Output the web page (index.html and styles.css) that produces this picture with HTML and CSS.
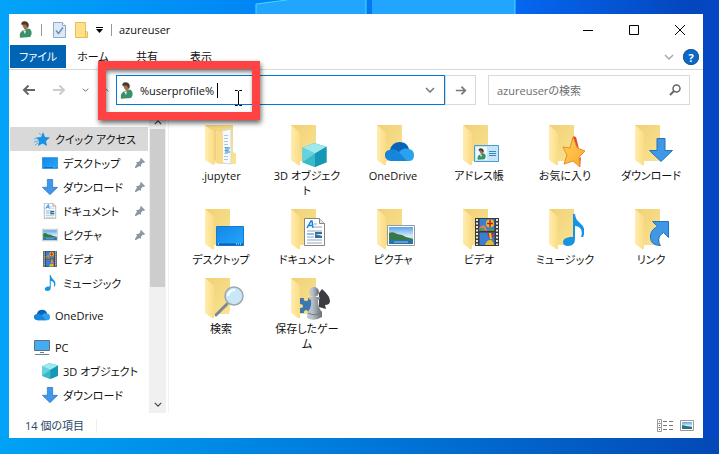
FILE: index.html
```html
<!DOCTYPE html>
<html lang="ja">
<head>
<meta charset="utf-8">
<title>azureuser</title>
<link rel="stylesheet" href="styles.css">
</head>
<body>
<svg width="0" height="0" class="defs" aria-hidden="true">
  <defs>
    <linearGradient id="gBack" x2="1" y2="1"><stop offset="0" stop-color="#f0d075"/><stop offset="1" stop-color="#fae392"/></linearGradient>
    <linearGradient id="gFlap" x2="1" y2="0"><stop offset="0" stop-color="#ffedb0"/><stop offset="1" stop-color="#fbdc84"/></linearGradient>
    <linearGradient id="gSky" x2="0" y2="1"><stop offset="0" stop-color="#5aa5e8"/><stop offset=".55" stop-color="#d8ecf8"/><stop offset="1" stop-color="#4b8fc0"/></linearGradient>
    <linearGradient id="gScreen" x2="1" y2="1"><stop offset="0" stop-color="#1486e8"/><stop offset="1" stop-color="#24a8fb"/></linearGradient>
    <linearGradient id="gStar" x2="1" y2="1"><stop offset="0" stop-color="#ffd65a"/><stop offset="1" stop-color="#fba52c"/></linearGradient>
    <linearGradient id="gPawn" x2="1" y2="0"><stop offset="0" stop-color="#c9cfd4"/><stop offset=".4" stop-color="#b4bbc1"/><stop offset="1" stop-color="#666e75"/></linearGradient>
    <symbol id="folder" viewBox="0 0 44 42">
      <path d="M6 0H31V31L30 36H15L6 30Z" fill="url(#gBack)"/>
      <path d="M6 0L14 7Q15 8 15 10V39Q15 41 13 40L6 35Z" fill="url(#gFlap)"/>
    </symbol>
    <symbol id="user" viewBox="0 0 14 18">
      <path d="M1 18Q0 12 4 10L11 8Q14 10 13.500 14L12 17Z" fill="#3a9069"/>
      <path d="M4.500 10l2 4 1-4z" fill="#e8f2ee"/>
      <path d="M3.500 4Q3 1.500 6.500 1.500T10 5Q9.500 9 7.500 9.500T3.500 4Z" fill="#a5714d"/>
      <path d="M2.500 4Q2 0 6 0T10.500 4L10 7 7 3.500Z" fill="#4b3a2c"/>
    </symbol>
    <symbol id="down" viewBox="0 0 24 24">
      <path d="M8 .5h8v12h7.500L12 23.500.5 12.500H8z" fill="#3f97e8" stroke="#2373bd"/>
    </symbol>
    <symbol id="screen" viewBox="0 0 28 20">
      <path d="M.5.5h27v19H.5z" fill="url(#gScreen)" stroke="#147cca"/>
      <path d="M1 17.500h26V19H1z" fill="#0563ab"/><path d="M2 18h2M20 18h5" stroke="#fff" stroke-dasharray="1 1"/>
    </symbol>
    <symbol id="doc" viewBox="0 0 21 28">
      <path d="M.5.5h15l5 5v22H.5z" fill="#fff" stroke="#858585"/><path d="M15.500.5v5h5" fill="#e5e5e5" stroke="#858585"/>
      <path d="M3 10l4-7h1l1 7M4.500 7.500h4" fill="none" stroke="#1885d4" stroke-width="1.500"/>
      <path d="M10 6h3M10 9h8M3 13h15M3 19h7M3 22h15M3 25h15" stroke="#8ba9bf"/><path d="M3 16h7" stroke="#1885d4"/>
      <path d="M11 14h7v6h-7z" fill="#376f9d"/><path d="M11 16h7v2z" fill="#d8ecf8"/>
    </symbol>
    <symbol id="picture" viewBox="0 0 28 21">
      <path d="M.5.5h27v20H.5z" fill="#fff" stroke="#929ba2"/><path d="M2 2h24v17H2z" fill="url(#gSky)"/>
      <path d="M2 8q4-2 8 1l5 1 4 2 7 2v1H2z" fill="#367849"/><path d="M2 15h24v4H2z" fill="#2872a8"/><path d="M7 17h14" stroke="#94c9e6"/>
    </symbol>
    <symbol id="film" viewBox="0 0 24 28">
      <path d="M0 0h24v28H0z" fill="#393939"/><path d="M2 1v26M22 1v26" stroke="#e8e8e8" stroke-width="2" stroke-dasharray="2 1.500"/>
      <path d="M4.500 1h15v12h-15zM4.500 14.500h15v12.500h-15z" fill="#397ed3"/>
      <path d="M4.500 9l5-2 3 6h-8z" fill="#e8795e"/><circle cx="15" cy="5.500" r="4" fill="#f3bc24"/><path d="M15 1.500v8M12 5.500h6" stroke="#a72531" stroke-width="1.500"/>
      <path d="M12 15h7q-1 6-3 6t-4-6z" fill="#bd3338"/><path d="M14 15h2l1 6h-2z" fill="#f6ca23"/><path d="M10 27q2-5 5-5t4 5z" fill="#f0b725"/><path d="M5 10h3l3 3H5zM14 11h5v2h-5z" fill="#4f9845"/>
    </symbol>
    <symbol id="note" viewBox="0 0 21 32">
      <path d="M10 0h2q0 5 5 9 7 6 3 14h-2q2-6-1-9-2-2-5-2v13Q12 32 5 32 0 32 0 28T7 23h3z" fill="#1594e6"/>
    </symbol>
    <symbol id="cube" viewBox="0 0 25 25">
      <path d="M0 5l12-5 13 4v16l-12 5L0 20z" fill="#2ab4cc"/><path d="M0 5l12-5 13 4-12 7z" fill="#9fe8ee"/><path d="M0 5l13 6v14L0 20z" fill="#64d2df"/><path d="M13 11L0 20l13 5z" fill="#38bac9"/><path d="M13 11l12-7v16l-12 5z" fill="#1597b5"/>
    </symbol>
    <symbol id="cloud" viewBox="0 0 29 19">
      <path d="M5 8Q7 0 15 0q7 0 9 7L14 13 1 16Q-2 9 5 8z" fill="#0864b8"/>
      <path d="M5 8q5-2 9 2l8 8H6Q1 19 0 14 0 9 5 8z" fill="#1685d9"/><path d="M14 10q4-5 10-3 5 1 5 6 0 6-5 6H6q-4-1-5-3z" fill="#2ba2ed"/><path d="M14 10l8 9H6q-4-1-5-3z" fill="#1785dc"/>
    </symbol>
    <symbol id="pin" viewBox="0 0 10 10"><path d="M6 0l4 4-1 1-1-.5-2 2V9L4.500 8 1 10H0V9l2-3.500L1 4h2.500l2-2L5 1z" fill="#8d969d"/></symbol>
    <symbol id="chev" viewBox="0 0 10 6"><path d="M1 1l4 4 4-4" fill="none" stroke="currentColor" stroke-width="1.500"/></symbol>
    <symbol id="arrow" viewBox="0 0 14 12"><path d="M1 6h11M7.500 1.500L12 6l-4.500 4.500" fill="none" stroke="currentColor" stroke-width="2"/></symbol>
  </defs>
</svg>

<svg class="wallpaper" viewBox="0 0 719 454" preserveAspectRatio="none" aria-hidden="true">
  <defs>
    <linearGradient id="w1" x2="1" y2="0"><stop offset="0" stop-color="#03a3f8"/><stop offset=".32" stop-color="#0089f5"/><stop offset=".72" stop-color="#0567ef"/><stop offset=".96" stop-color="#0446bd"/><stop offset="1" stop-color="#0547c3"/></linearGradient>
    <linearGradient id="w2" x2="1" y2="0"><stop offset="0" stop-color="#00a2f6"/><stop offset=".5" stop-color="#0079da"/><stop offset="1" stop-color="#0449b6"/></linearGradient>
  </defs>
  <path d="M0 0h719v454H0z" fill="url(#w1)"/><path d="M0 438h719v16H0z" fill="url(#w2)"/>
  <path d="M256 14V4l31-4h79v14zM372 0h143v14H372z" fill="#22a5ff"/>
  <path d="M256 14V4l31-4M366 0v14M515 0v14" fill="none" stroke="#46d8ff"/>
</svg>

<main class="window">
  <header class="titlebar">
    <svg class="user"><use href="#user"/></svg>
    <span class="divider first"></span>
    <svg class="qa" viewBox="0 0 13 16"><path d="M.5.5h9l3 3v12H.5z" fill="#dce9f7" stroke="#91a9c5"/><path d="M9.500.5v3h3" fill="#fff" stroke="#91a9c5"/><path d="M3 8.500l2.500 3 4.500-6" fill="none" stroke="#6c8fb8" stroke-width="1.500"/></svg>
    <svg class="qa wide" viewBox="0 0 13 16"><path d="M.5.500h10V9l2 1v5.500H.5z" fill="#ffe18a" stroke="#e7bd54"/><path d="M10.500 9v6" stroke="#e7bd54"/></svg>
    <svg class="more" viewBox="0 0 7 6"><path d="M0 0h7v1H0zM0 2h7L3.500 6z"/></svg>
    <span class="divider"></span>
    <span class="title">azureuser</span>
    <div class="controls">
      <button aria-label="最小化"><svg viewBox="0 0 10 10"><path d="M0 5.500h10" stroke="#000"/></svg></button>
      <button aria-label="最大化"><svg viewBox="0 0 10 10"><path d="M.5.5h9v9h-9z" fill="none" stroke="#000"/></svg></button>
      <button aria-label="閉じる"><svg viewBox="0 0 10 10"><path d="M0 0l10 10M10 0L0 10" stroke="#000"/></svg></button>
    </div>
  </header>

  <nav class="tabs">
    <button class="active">ファイル</button><button>ホーム</button><button>共有</button><button>表示</button>
    <div class="help">
      <svg class="chev"><use href="#chev"/></svg>
      <button aria-label="ヘルプ">?</button>
    </div>
  </nav>

  <div class="addressbar">
    <button class="nav" aria-label="戻る"><svg class="arrow flip"><use href="#arrow"/></svg></button>
    <button class="nav off" aria-label="進む"><svg class="arrow"><use href="#arrow"/></svg></button>
    <button class="nav small" aria-label="履歴"><svg class="chevs"><use href="#chev"/></svg></button>
    <button class="nav small" aria-label="上へ"><svg class="chevs up"><use href="#chev"/></svg></button>
    <div class="path">
      <svg class="user"><use href="#user"/></svg>
      <input type="text" value="%userprofile%" aria-label="アドレス">
      <span class="caret"></span>
      <svg class="chev"><use href="#chev"/></svg>
    </div>
    <button class="go" aria-label="移動"><svg class="arrow"><use href="#arrow"/></svg></button>
    <div class="search">
      <input type="search" placeholder="azureuserの検索" aria-label="azureuserの検索">
      <svg viewBox="0 0 12 12"><circle cx="7.500" cy="4.500" r="3.500" fill="none" stroke="#666" stroke-width="1.500"/><path d="M5 7L1 11" stroke="#666" stroke-width="2"/></svg>
    </div>
    <div class="highlight"></div>
    <svg class="ibeam" viewBox="0 0 7 16"><path d="M0 .5h2.500l1 1 1-1H7M0 15.500h2.500l1-1 1 1H7M3.500 1v14" fill="none" stroke="#000"/></svg>
  </div>

  <div class="body">
    <aside class="side">
      <ul class="tree">
        <li class="root selected"><svg viewBox="0 0 16 16"><path d="M9 1l2 5 5 .5-4 3.500 1 5-4.500-2.500L4 15l1-5-3-3.500L7 6z" fill="#1e90e0"/><path d="M0 8l4-1M0 11l4-1M1 14l3-2M5 2l2 2" stroke="#56b4ee"/></svg>クイック アクセス</li>
        <li><svg><use href="#screen"/></svg>デスクトップ<svg class="pin"><use href="#pin"/></svg></li>
        <li><svg><use href="#down"/></svg>ダウンロード<svg class="pin"><use href="#pin"/></svg></li>
        <li><svg><use href="#doc"/></svg>ドキュメント<svg class="pin"><use href="#pin"/></svg></li>
        <li><svg><use href="#picture"/></svg>ピクチャ<svg class="pin"><use href="#pin"/></svg></li>
        <li><svg><use href="#film"/></svg>ビデオ</li>
        <li><svg><use href="#note"/></svg>ミュージック</li>
        <li class="root gap"><svg><use href="#cloud"/></svg>OneDrive</li>
        <li class="root gap"><svg viewBox="0 0 16 16"><path d="M.5 1.500h15v10H.5z" fill="#42adf4" stroke="#60717d"/><path d="M6 13.500h4M1 15.500h14" stroke="#6c7f8c"/></svg>PC</li>
        <li><svg><use href="#cube"/></svg>3D オブジェクト</li>
        <li><svg><use href="#down"/></svg>ダウンロード</li>
        <li class="cut">デスクトップ</li>
      </ul>
      <div class="scrollbar">
        <svg class="up"><use href="#chev"/></svg>
        <div class="thumb"></div>
        <svg><use href="#chev"/></svg>
      </div>
    </aside>

    <ul class="files">
      <li><svg viewBox="0 0 44 42"><path d="M6 0H34V27L37 29V39H20L6 33Z" fill="url(#gBack)"/><path d="M23 6l9-2v35l-9-1z" fill="#f7f9fb" stroke="#d5d9dc"/><path d="M27 10v26" stroke="#a9c9e0" stroke-width="4" stroke-dasharray="1 2"/><path d="M26 23h5M26 25h4M26 27h5" stroke="#1681d1"/><path d="M6 0l10 7v32l-2 1-8-5z" fill="url(#gFlap)"/><path d="M16 5l8 4v30l-8-4z" fill="#f8dc8c"/><path d="M16 5v30" stroke="#e6c572"/></svg>.jupyter</li>
      <li><svg viewBox="0 0 44 42"><use href="#folder" width="44" height="42"/><use href="#cube" x="17" y="18" width="25" height="24"/></svg>3D オブジェク<br>ト</li>
      <li><svg viewBox="0 0 44 42"><use href="#folder" width="44" height="42"/><use href="#cloud" x="14" y="17" width="29" height="19"/></svg>OneDrive</li>
      <li><svg viewBox="0 0 44 42"><use href="#folder" width="44" height="42"/><path d="M17.500 20.500h24v16h-24z" fill="#c4e6f8" stroke="#4a9dca"/><path d="M19 22h11v13H19z" fill="#eef9ff"/><use href="#user" x="20" y="23" width="9" height="12"/><path d="M32 26.500h7M32 28.500h7M32 30.500h7" stroke="#3c89b8"/></svg>アドレス帳</li>
      <li><svg viewBox="0 0 44 42"><use href="#folder" width="44" height="42"/><path d="M30 11l3 1 3 12-3-3zM34 35l3 7 1-10z" fill="#dd4b2a"/><path d="M30 12l4 11 8 3-6 6 1 10-7-6-9 3 3-9-4-8 7 1z" fill="url(#gStar)" stroke="#e98b25"/></svg>お気に入り</li>
      <li><svg viewBox="0 0 44 42"><use href="#folder" width="44" height="42"/><use href="#down" x="20" y="13" width="24" height="24"/></svg>ダウンロード</li>
      <li><svg viewBox="0 0 44 42"><use href="#folder" width="44" height="42"/><use href="#screen" x="17" y="17" width="28" height="20"/></svg>デスクトップ</li>
      <li><svg viewBox="0 0 44 42"><use href="#folder" width="44" height="42"/><use href="#doc" x="19" y="9" width="21" height="28"/></svg>ドキュメント</li>
      <li><svg viewBox="0 0 44 42"><use href="#folder" width="44" height="42"/><use href="#picture" x="16" y="16" width="28" height="21"/></svg>ピクチャ</li>
      <li><svg viewBox="0 0 44 42"><use href="#folder" width="44" height="42"/><use href="#film" x="18" y="9" width="24" height="28"/></svg>ビデオ</li>
      <li><svg viewBox="0 0 44 42"><use href="#folder" width="44" height="42"/><use href="#note" x="20" y="5" width="21" height="32"/></svg>ミュージック</li>
      <li><svg viewBox="0 0 44 42"><use href="#folder" width="44" height="42"/><path d="M23.500 12.500h16v16l-5-5q-5 3-5 7t2 6q-9 0-10-7-1-8 7-12z" fill="#3f97e8" stroke="#2373bd"/></svg>リンク</li>
      <li><svg viewBox="0 0 44 42"><use href="#folder" width="44" height="42"/><path d="M28 26L17 37" stroke="#7d8991" stroke-width="3" stroke-linecap="round"/><circle cx="35" cy="18" r="9" fill="#c9e7f7" stroke="#9ca8af" stroke-width="1.500"/><path d="M29 18q1-6 7-6" fill="none" stroke="#fff" stroke-width="2"/></svg>検索</li>
      <li><svg viewBox="0 0 44 42"><use href="#folder" width="44" height="42"/><path d="M15 20h4q-1 3 2 3t2-3h4v15h-4q0-3-2-3t-2 3h-4v-5q3 0 3-2t-3-2z" fill="#3b78ad"/><path d="M37 11q8 7 8 12 0 4-5 4l1 4-7-2V15z" fill="#3b3d40"/><circle cx="29" cy="14" r="5" fill="url(#gPawn)"/><path d="M24 19h11v2l-2 1q0 8 4 12v5q-8 5-15 1v-5q5-5 4-13l-2-1z" fill="url(#gPawn)"/><path d="M23 35q7 4 14-1" fill="none" stroke="#737c83"/></svg>保存したゲー<br>ム</li>
    </ul>
  </div>

  <footer class="status">
    <span>14 個の項目</span><span class="line"></span>
    <div class="views">
      <button aria-label="詳細"><svg viewBox="0 0 16 13"><path d="M.5.5h4v12h-4zM.5 4.500h4M.5 8.500h4" fill="none" stroke="#999"/><path d="M6 2.500h4M12 2.500h4M6 6.500h4M12 6.500h4M6 10.500h4M12 10.500h4" stroke="#777"/><path d="M2 2h1v1H2zM2 6h1v1H2z" fill="#2679b8"/><path d="M2 10h1v1H2z" fill="#c33"/></svg></button>
      <button aria-label="大アイコン"><svg viewBox="0 0 14 11"><path d="M.5.5h13v10H.5z" fill="#fff" stroke="#999"/><path d="M2 2h10v7H2z" fill="url(#gSky)"/><path d="M2 5l4 1 6 1v2H2z" fill="#2d6f7a"/></svg></button>
    </div>
  </footer>
</main>
</body>
</html>
```
FILE: styles.css
```css
* { box-sizing: border-box; }

body {
  position: relative;
  z-index: 0;
  margin: 0;
  min-height: 100vh;
  padding: 14px 16px 16px 9px;
  display: flex;
  font: 11px/15px "Open Sans", "Noto Sans CJK JP", sans-serif;
  font-feature-settings: "palt";
  color: #111;
  background: #0569d8;
}

svg { display: block; flex: none; overflow: visible; }
ul { list-style: none; margin: 0; padding: 0; }
button, input { font: inherit; font-feature-settings: inherit; color: inherit; border: 0; padding: 0; background: none; }
.defs { position: absolute; }

.wallpaper { position: absolute; inset: 0; width: 100%; height: 100%; z-index: -1; overflow: hidden; }

.window { flex: 1; min-width: 0; display: flex; flex-direction: column; background: #fff; }

.user { width: 13px; height: 17px; }
.chev { width: 10px; height: 6px; color: #777; }
.arrow { width: 14px; height: 12px; }
.flip { transform: rotate(180deg); }

.titlebar { height: 31px; display: flex; align-items: center; padding-left: 10px; }
.divider { width: 1px; height: 12px; background: #999; }
.divider.first { margin: 0 11px 0 9px; }
.qa { width: 13px; height: 16px; }
.wide { margin: 0 8px 0 9px; }
.more { width: 7px; height: 6px; margin-right: 8px; }
.title { margin-left: 7px; }
.controls { margin-left: auto; display: flex; }
.controls button { width: 46px; height: 31px; display: grid; place-items: center; }
.controls svg { width: 10px; height: 10px; }

.tabs { height: 25px; display: flex; border-bottom: 1px solid #d9d9d9; padding-left: 1px; }
.tabs > button { width: 54px; height: 23px; }
.tabs > .active { width: 56px; background: #0063b4; color: #fff; }
.help { margin-left: auto; display: flex; align-items: center; gap: 9px; padding-right: 4px; }
.help .chev { color: #aaa; }
.help button { width: 16px; height: 16px; border-radius: 8px; background: #0a6ac8; color: #fff; font-weight: 700; outline: 1px solid #215690; outline-offset: -1px; }

.addressbar { position: relative; height: 48px; display: flex; align-items: flex-start; padding: 5px 13px 0 7px; }
.nav { width: 26px; height: 30px; display: grid; place-items: center; color: #666; margin-right: 4px; }
.nav.off { color: #ccc; }
.nav.small { width: 20px; margin: 0 1px 0 0; }
.chevs { width: 7px; height: 4px; }
.nav.small:nth-of-type(3) { width: 18px; }
.up { transform: rotate(180deg); }
.path { position: relative; flex: 1; min-width: 0; height: 30px; border: 1px solid #0078d7; display: flex; align-items: center; padding: 0 9px 0 3px; }
.path input { flex: 1; min-width: 0; margin-left: 7px; outline: 0; }
.caret { position: absolute; left: 100px; top: 7px; width: 1px; height: 15px; background: #000; }
.go { width: 31px; height: 30px; border: 1px solid #d9d9d9; display: grid; place-items: center; color: #777; }
.go svg { width: 12px; height: 11px; }
.search { width: 202px; height: 30px; margin-left: 12px; border: 1px solid #d9d9d9; display: flex; align-items: center; padding: 0 8px; }
.search input { flex: 1; min-width: 0; outline: 0; }
.search input::placeholder { color: #6d6d6d; opacity: 1; }
.search svg { width: 12px; height: 12px; }

.highlight { position: absolute; z-index: 2; left: 89px; top: -9px; width: 162px; height: 59px; border: 8px solid #ff4242; box-shadow: 1px 3px 5px rgba(0, 0, 0, .6), inset 1px 3px 4px rgba(0, 0, 0, .5); pointer-events: none; }
.ibeam { position: absolute; z-index: 3; left: 226px; top: 20px; width: 7px; height: 16px; }

.body { flex: 1 1 0; min-height: 0; display: flex; overflow: hidden; }
.side { width: 160px; display: flex; border-right: 1px solid #f1f1f1; padding-left: 1px; }
.tree { flex: 1; min-width: 0; padding-top: 9px; overflow: hidden; }
.tree li { height: 24px; display: flex; align-items: center; padding-left: 32px; white-space: nowrap; }
.tree li.root { padding-left: 24px; }
.tree li.gap { margin-top: 8px; }
.tree li.selected { background: #d9d9d9; margin-right: 1px; }
.tree li.cut { padding-left: 53px; }
.tree svg { width: 16px; height: 16px; margin-right: 5px; }
.tree .pin { width: 10px; height: 10px; margin: 0 4px 0 auto; }
.scrollbar { width: 17px; background: #f0f0f0; color: #444; display: flex; flex-direction: column; align-items: center; padding: 2px 0 6px; margin-right: 2px; }
.scrollbar svg { width: 8px; height: 5px; }
.thumb { width: 15px; height: 158px; margin: 4px 0 auto; background: #cdcdcd; }

.files { flex: 1; min-width: 0; display: grid; grid-template-columns: repeat(auto-fill, 86px); align-content: start; row-gap: 11px; padding: 7px 0 0 9px; }
.files li { text-align: center; }
.files svg { width: 44px; height: 42px; margin: 0 auto 1px; }

.status { height: 25px; display: flex; align-items: center; padding: 0 9px 0 16px; color: #25476a; }
.line { width: 1px; height: 14px; background: #eee; margin-left: 12px; }
.views { margin-left: auto; display: flex; align-items: center; gap: 7px; }
.views svg { width: 16px; height: 13px; }
.views button + button svg { width: 14px; height: 11px; }
```
